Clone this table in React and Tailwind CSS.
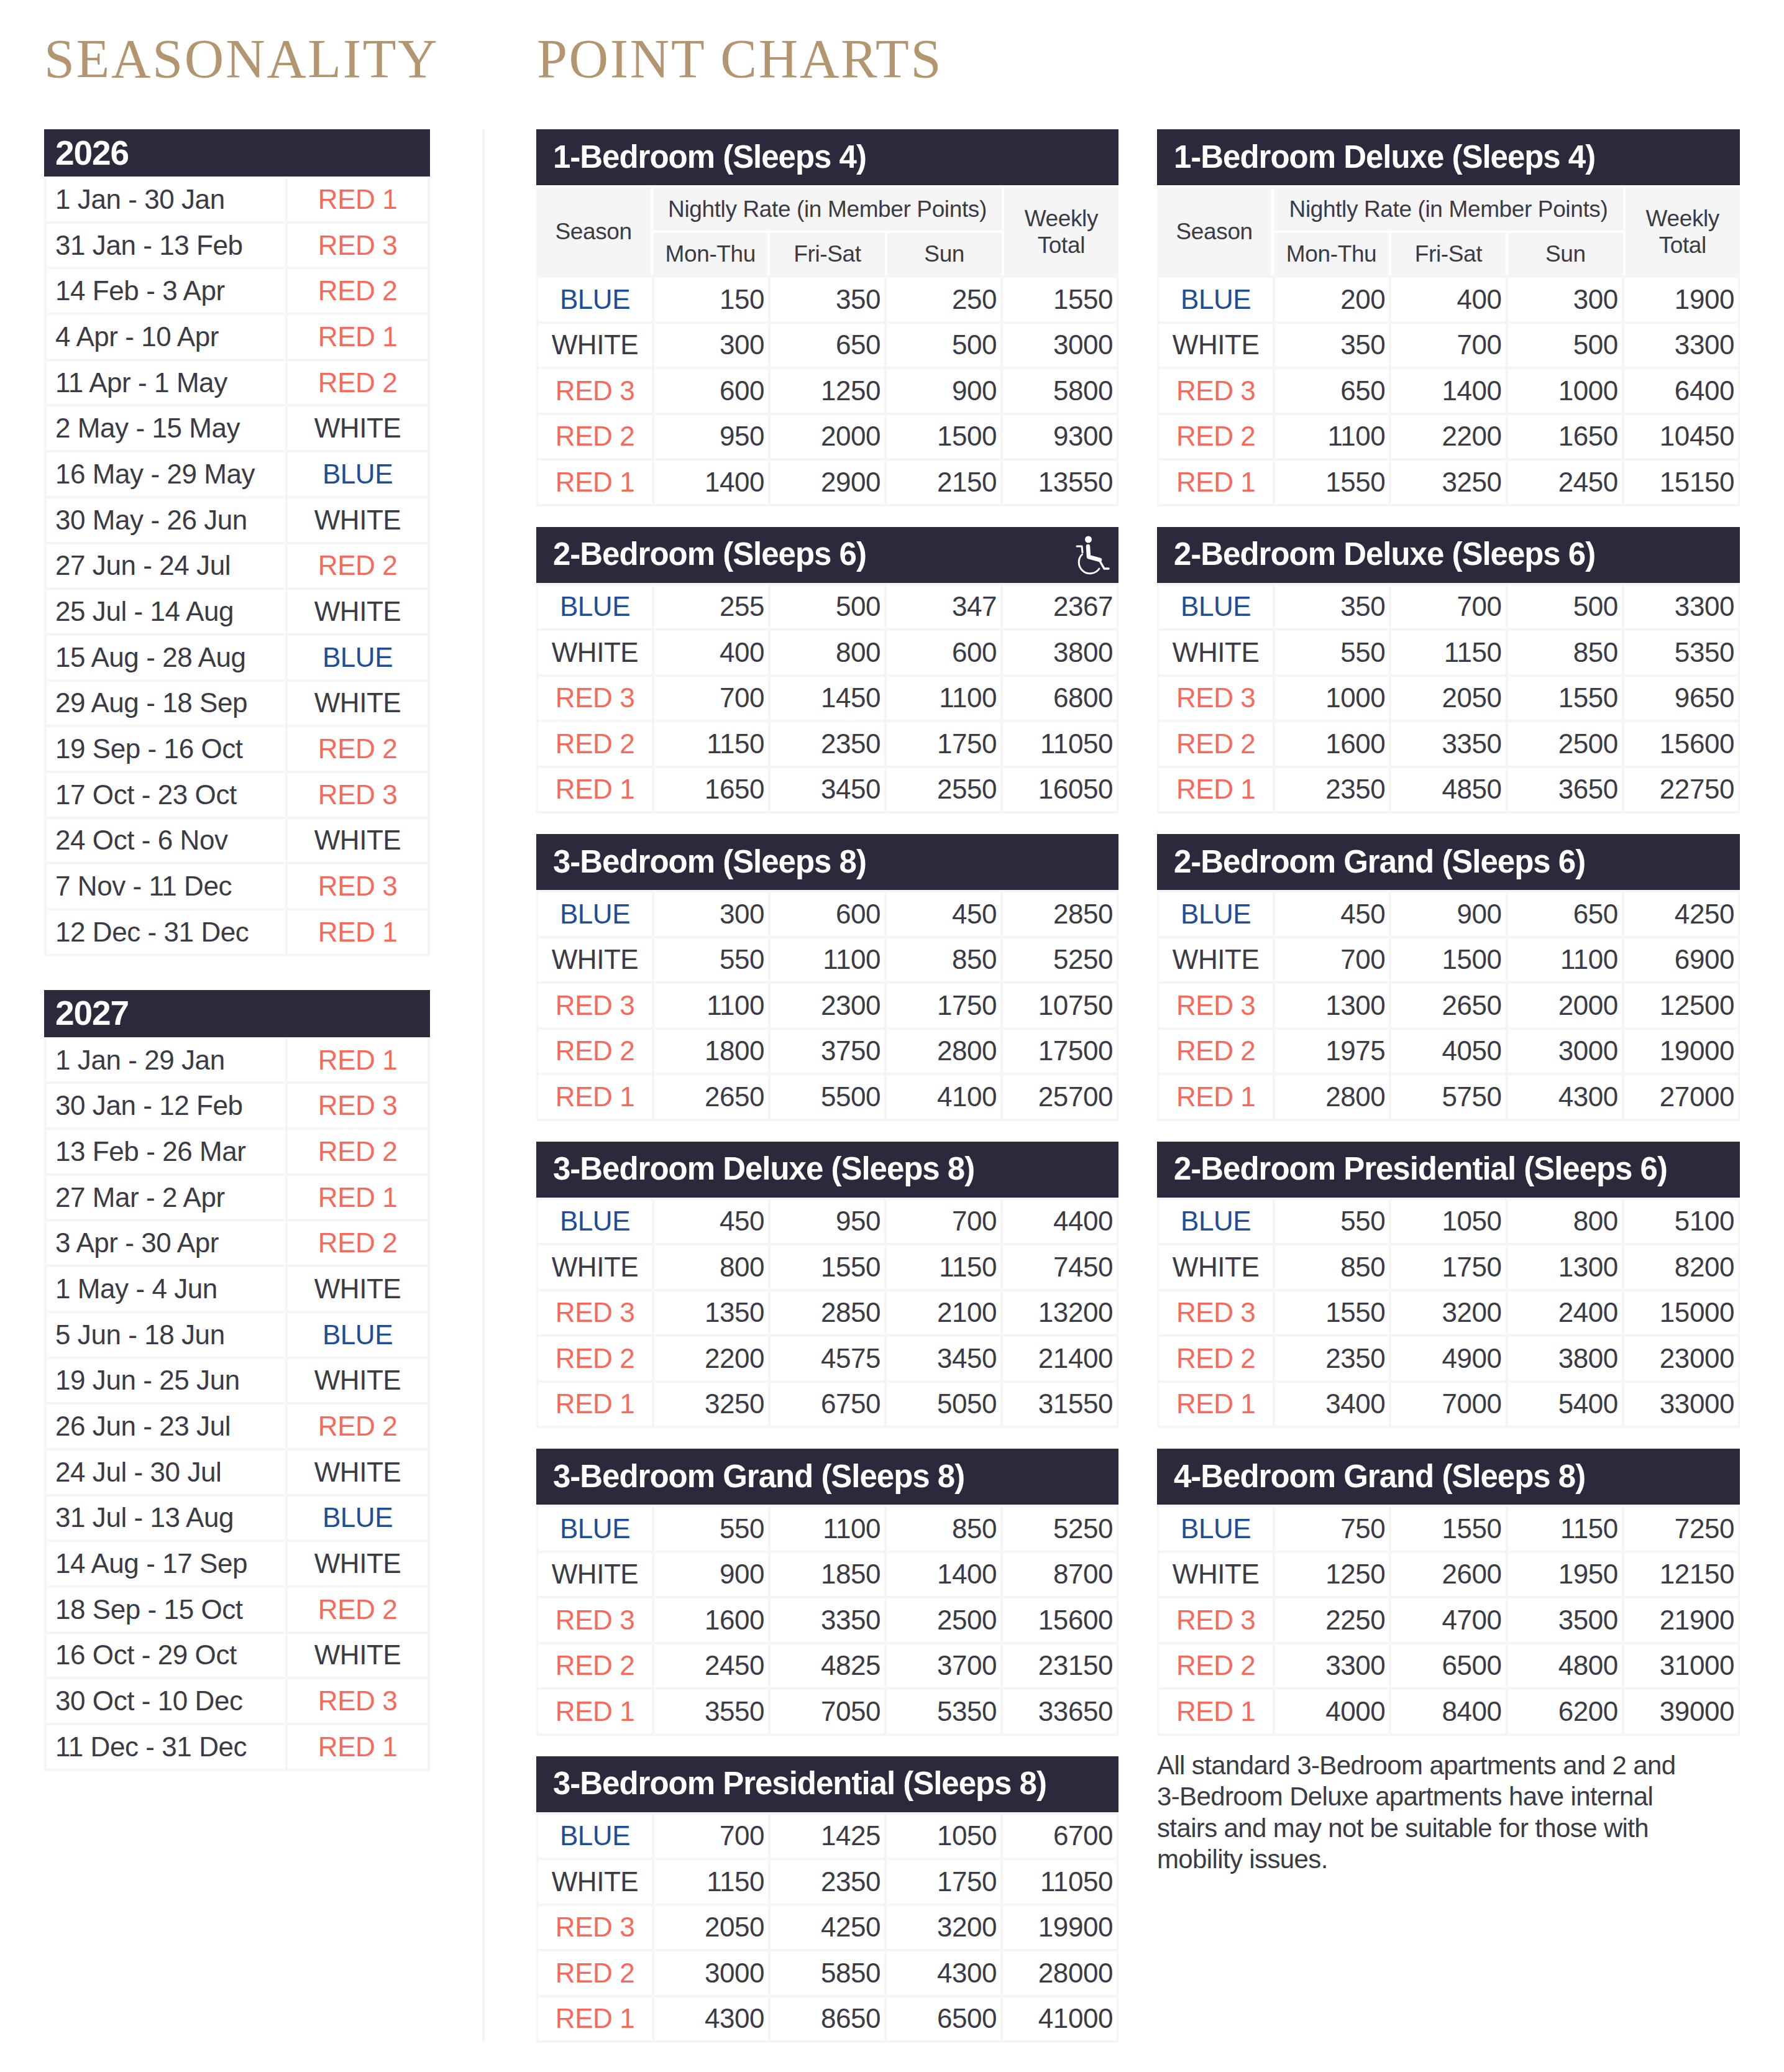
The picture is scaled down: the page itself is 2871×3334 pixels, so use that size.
import React from "react";

// colour per season label
const seasonColor = {
  BLUE: "text-[#1f4e95]",
  WHITE: "text-[#3a3b45]",
  "RED 1": "text-[#f7695a]",
  "RED 2": "text-[#f7695a]",
  "RED 3": "text-[#f7695a]",
};

const season2026 = [
  ["1 Jan - 30 Jan", "RED 1"],
  ["31 Jan - 13 Feb", "RED 3"],
  ["14 Feb - 3 Apr", "RED 2"],
  ["4 Apr - 10 Apr", "RED 1"],
  ["11 Apr - 1 May", "RED 2"],
  ["2 May - 15 May", "WHITE"],
  ["16 May - 29 May", "BLUE"],
  ["30 May - 26 Jun", "WHITE"],
  ["27 Jun - 24 Jul", "RED 2"],
  ["25 Jul - 14 Aug", "WHITE"],
  ["15 Aug - 28 Aug", "BLUE"],
  ["29 Aug - 18 Sep", "WHITE"],
  ["19 Sep - 16 Oct", "RED 2"],
  ["17 Oct - 23 Oct", "RED 3"],
  ["24 Oct - 6 Nov", "WHITE"],
  ["7 Nov - 11 Dec", "RED 3"],
  ["12 Dec - 31 Dec", "RED 1"],
];

const season2027 = [
  ["1 Jan - 29 Jan", "RED 1"],
  ["30 Jan - 12 Feb", "RED 3"],
  ["13 Feb - 26 Mar", "RED 2"],
  ["27 Mar - 2 Apr", "RED 1"],
  ["3 Apr - 30 Apr", "RED 2"],
  ["1 May - 4 Jun", "WHITE"],
  ["5 Jun - 18 Jun", "BLUE"],
  ["19 Jun - 25 Jun", "WHITE"],
  ["26 Jun - 23 Jul", "RED 2"],
  ["24 Jul - 30 Jul", "WHITE"],
  ["31 Jul - 13 Aug", "BLUE"],
  ["14 Aug - 17 Sep", "WHITE"],
  ["18 Sep - 15 Oct", "RED 2"],
  ["16 Oct - 29 Oct", "WHITE"],
  ["30 Oct - 10 Dec", "RED 3"],
  ["11 Dec - 31 Dec", "RED 1"],
];

const labels = ["BLUE", "WHITE", "RED 3", "RED 2", "RED 1"];

const leftCharts = [
  {
    title: "1-Bedroom (Sleeps 4)",
    head: true,
    rows: [
      [150, 350, 250, 1550],
      [300, 650, 500, 3000],
      [600, 1250, 900, 5800],
      [950, 2000, 1500, 9300],
      [1400, 2900, 2150, 13550],
    ],
  },
  {
    title: "2-Bedroom (Sleeps 6)",
    access: true,
    rows: [
      [255, 500, 347, 2367],
      [400, 800, 600, 3800],
      [700, 1450, 1100, 6800],
      [1150, 2350, 1750, 11050],
      [1650, 3450, 2550, 16050],
    ],
  },
  {
    title: "3-Bedroom (Sleeps 8)",
    rows: [
      [300, 600, 450, 2850],
      [550, 1100, 850, 5250],
      [1100, 2300, 1750, 10750],
      [1800, 3750, 2800, 17500],
      [2650, 5500, 4100, 25700],
    ],
  },
  {
    title: "3-Bedroom Deluxe (Sleeps 8)",
    rows: [
      [450, 950, 700, 4400],
      [800, 1550, 1150, 7450],
      [1350, 2850, 2100, 13200],
      [2200, 4575, 3450, 21400],
      [3250, 6750, 5050, 31550],
    ],
  },
  {
    title: "3-Bedroom Grand (Sleeps 8)",
    rows: [
      [550, 1100, 850, 5250],
      [900, 1850, 1400, 8700],
      [1600, 3350, 2500, 15600],
      [2450, 4825, 3700, 23150],
      [3550, 7050, 5350, 33650],
    ],
  },
  {
    title: "3-Bedroom Presidential (Sleeps 8)",
    rows: [
      [700, 1425, 1050, 6700],
      [1150, 2350, 1750, 11050],
      [2050, 4250, 3200, 19900],
      [3000, 5850, 4300, 28000],
      [4300, 8650, 6500, 41000],
    ],
  },
];

const rightCharts = [
  {
    title: "1-Bedroom Deluxe (Sleeps 4)",
    head: true,
    rows: [
      [200, 400, 300, 1900],
      [350, 700, 500, 3300],
      [650, 1400, 1000, 6400],
      [1100, 2200, 1650, 10450],
      [1550, 3250, 2450, 15150],
    ],
  },
  {
    title: "2-Bedroom Deluxe (Sleeps 6)",
    rows: [
      [350, 700, 500, 3300],
      [550, 1150, 850, 5350],
      [1000, 2050, 1550, 9650],
      [1600, 3350, 2500, 15600],
      [2350, 4850, 3650, 22750],
    ],
  },
  {
    title: "2-Bedroom Grand (Sleeps 6)",
    rows: [
      [450, 900, 650, 4250],
      [700, 1500, 1100, 6900],
      [1300, 2650, 2000, 12500],
      [1975, 4050, 3000, 19000],
      [2800, 5750, 4300, 27000],
    ],
  },
  {
    title: "2-Bedroom Presidential (Sleeps 6)",
    rows: [
      [550, 1050, 800, 5100],
      [850, 1750, 1300, 8200],
      [1550, 3200, 2400, 15000],
      [2350, 4900, 3800, 23000],
      [3400, 7000, 5400, 33000],
    ],
  },
  {
    title: "4-Bedroom Grand (Sleeps 8)",
    rows: [
      [750, 1550, 1150, 7250],
      [1250, 2600, 1950, 12150],
      [2250, 4700, 3500, 21900],
      [3300, 6500, 4800, 31000],
      [4000, 8400, 6200, 39000],
    ],
  },
];

const Wheelchair = () => (
  <svg width="80" height="80" viewBox="0 0 80 80" fill="none" className="mr-[1px]">
    <circle cx="32.5" cy="15" r="5.5" fill="white" />
    <path d="M32 26 L33 43 L51 48" stroke="white" strokeWidth="6.5" strokeLinecap="round" strokeLinejoin="round" />
    <path d="M50 48 L58 62 L65 62" stroke="white" strokeWidth="3.5" strokeLinecap="round" strokeLinejoin="round" />
    <path d="M14 26 L22 26 L23 36" stroke="white" strokeWidth="3" strokeLinecap="round" strokeLinejoin="round" />
    <path d="M22.5 39 A18 18 0 1 0 50 62" stroke="white" strokeWidth="3" strokeLinecap="round" />
  </svg>
);

const YearTable = ({ year, rows }) => (
  <div className="bg-[#f5f5f5]">
    <div className="h-[76px] bg-[#2b2a3c] flex items-center pl-[18px] text-white text-[55px] font-bold tracking-[-0.02em]">
      {year}
    </div>
    <div className="grid grid-cols-[1fr_225px] gap-[4px] px-[4px] pt-[2px] pb-[4px]">
      {rows.map(([d, s]) => (
        <React.Fragment key={d}>
          <div className="h-[69.7px] bg-white flex items-center pl-[14px] text-[44px] text-[#3a3b45] tracking-[-0.01em]">
            {d}
          </div>
          <div className={`h-[69.7px] bg-white flex items-center justify-center text-[44px] tracking-[-0.01em] ${seasonColor[s]}`}>
            {s}
          </div>
        </React.Fragment>
      ))}
    </div>
  </div>
);

const ChartTable = ({ chart }) => (
  <div className="bg-[#f5f5f5]">
    <div className="h-[90px] bg-[#2b2a3c] flex items-center justify-between pl-[27px] text-white text-[51px] font-bold tracking-[-0.02em]">
      <span>{chart.title}</span>
      {chart.access && <Wheelchair />}
    </div>
    {chart.head && (
      <div className="grid grid-cols-5 grid-rows-[69px_68px] gap-[4px] pt-[4px] bg-white text-[37px] text-[#3a3b45] tracking-[-0.01em]">
        <div className="row-span-2 bg-[#f5f5f5] flex items-center justify-center">Season</div>
        <div className="col-span-3 bg-[#f5f5f5] flex items-center justify-center">Nightly Rate (in Member Points)</div>
        <div className="row-span-2 bg-[#f5f5f5] flex items-center justify-center text-center leading-[43px]">
          Weekly<br />Total
        </div>
        <div className="bg-[#f5f5f5] flex items-center justify-center">Mon-Thu</div>
        <div className="bg-[#f5f5f5] flex items-center justify-center">Fri-Sat</div>
        <div className="bg-[#f5f5f5] flex items-center justify-center">Sun</div>
      </div>
    )}
    <div className="grid grid-cols-5 gap-[4px] px-[3px] pt-[4px] pb-[4px] text-[44px] tracking-[-0.01em]">
      {chart.rows.map((r, i) => (
        <React.Fragment key={i}>
          <div className={`h-[69.5px] bg-white flex items-center justify-center ${seasonColor[labels[i]]}`}>
            {labels[i]}
          </div>
          {r.map((n, j) => (
            <div key={j} className="h-[69.5px] bg-white flex items-center justify-end pr-[6px] text-[#3a3b45]">
              {n}
            </div>
          ))}
        </React.Fragment>
      ))}
    </div>
  </div>
);

export default function App() {
  return (
    <div className="w-[2871px] h-[3334px] bg-white px-[71px] pt-[51px] font-['Liberation_Sans',Arial,sans-serif]">
      {/* titles */}
      <div className="flex h-[88px] leading-[88px] text-[88px] text-[#b39670] font-['Liberation_Serif',serif] tracking-[0.03em]">
        <div className="w-[793px]">SEASONALITY</div>
        <div>POINT CHARTS</div>
      </div>

      <div className="flex mt-[69px]">
        {/* seasonality */}
        <div className="w-[622px] flex flex-col gap-[54px]">
          <YearTable year="2026" rows={season2026} />
          <YearTable year="2027" rows={season2027} />
        </div>

        <div className="w-[4px] h-[3078px] bg-[#f5f5f5] ml-[84px] mr-[83px]" />

        {/* point charts */}
        <div className="flex gap-[62px]">
          <div className="w-[937px] flex flex-col gap-[33px]">
            {leftCharts.map((c) => (
              <ChartTable key={c.title} chart={c} />
            ))}
          </div>
          <div className="w-[938px] flex flex-col gap-[33px]">
            {rightCharts.map((c) => (
              <ChartTable key={c.title} chart={c} />
            ))}
            <p className="-mt-[10px] text-[42px] leading-[50.5px] text-[#3a3b45] whitespace-nowrap tracking-[-0.015em]">
              All standard 3-Bedroom apartments and 2 and
              <br />
              3-Bedroom Deluxe apartments have internal
              <br />
              stairs and may not be suitable for those with
              <br />
              mobility issues.
            </p>
          </div>
        </div>
      </div>
    </div>
  );
}
